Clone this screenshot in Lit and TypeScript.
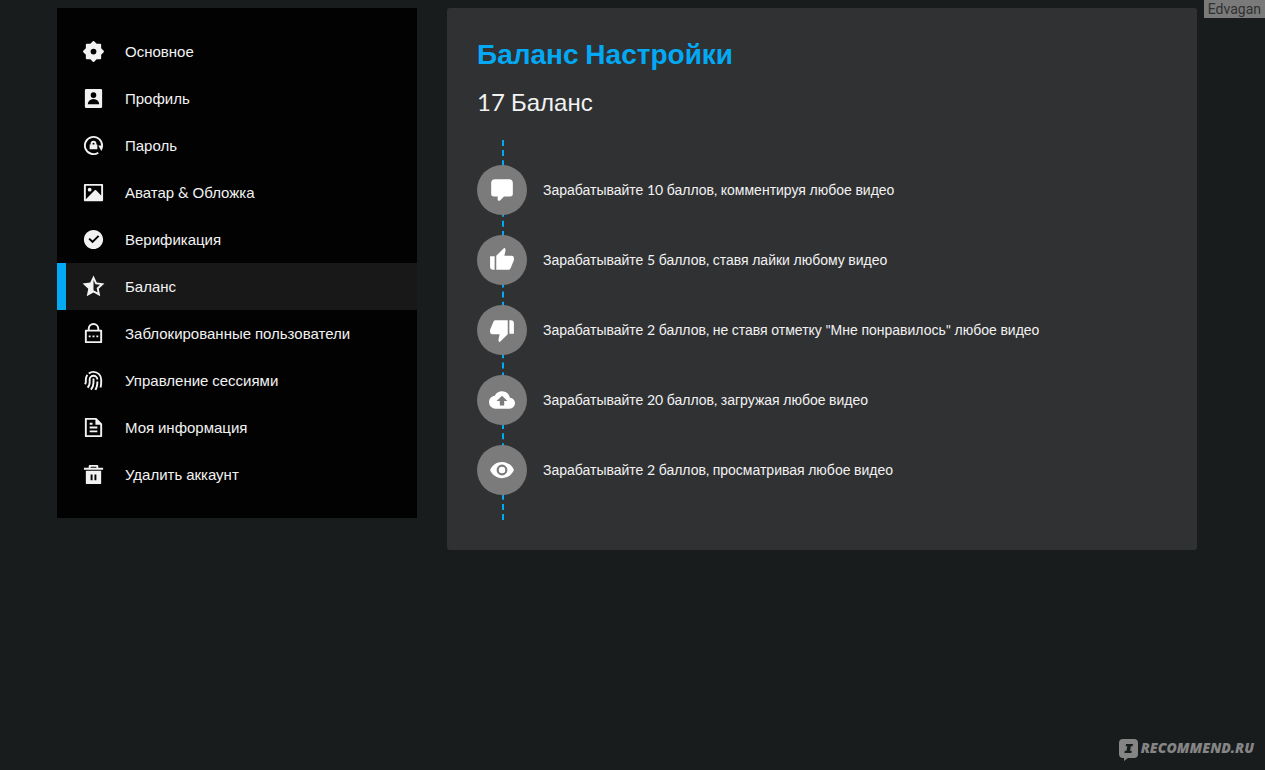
import { LitElement, html, svg, css } from "lit";
import { customElement, property } from "lit/decorators.js";

const ICONS: Record<string, string> = {
  settings:
    "M8.686 4l2.607-2.607a1 1 0 0 1 1.414 0L15.314 4H19a1 1 0 0 1 1 1v3.686l2.607 2.607a1 1 0 0 1 0 1.414L20 15.314V19a1 1 0 0 1-1 1h-3.686l-2.607 2.607a1 1 0 0 1-1.414 0L8.686 20H5a1 1 0 0 1-1-1v-3.686l-2.607-2.607a1 1 0 0 1 0-1.414L4 8.686V5a1 1 0 0 1 1-1h3.686zM12 15a3 3 0 1 0 0-6 3 3 0 0 0 0 6z",
  profile:
    "M4.500 2h15a1.500 1.500 0 0 1 1.500 1.500v17a1.500 1.500 0 0 1-1.500 1.500h-15a1.500 1.500 0 0 1-1.500-1.500v-17a1.500 1.500 0 0 1 1.500-1.500zM6 18h12a6 5.4 0 0 0-12 0zM12 11.4a2.9 2.9 0 1 0 0-5.8 2.9 2.9 0 0 0 0 5.8z",
  password:
    "M20 12a8 8 0 1 0-3.562 6.657l1.11 1.664A9.953 9.953 0 0 1 12 22C6.477 22 2 17.523 2 12S6.477 2 12 2s10 4.477 10 10a9.983 9.983 0 0 1-1.793 5.715L17 12h3zm-5-1h1v5H8v-5h1v-1a3 3 0 0 1 6 0v1zm-2 0v-1a1 1 0 0 0-2 0v1h2z",
  image:
    "M20 5H4v14l9.292-9.294a1 1 0 0 1 1.414 0L20 15.01V5zM2 3.993A1 1 0 0 1 2.992 3h18.016c.548 0 .992.445.992.993v16.014a1 1 0 0 1-.992.993H2.992A.993.993 0 0 1 2 20.007V3.993zM8 11a2 2 0 1 1 0-4 2 2 0 0 1 0 4z",
  verified:
    "M12 22C6.477 22 2 17.523 2 12S6.477 2 12 2s10 4.477 10 10-4.477 10-10 10zm-.997-6l7.07-7.071-1.414-1.414-5.656 5.657-2.829-2.829-1.414 1.414L11.003 16z",
  star:
    "M12 15.968l4.247 2.377-.949-4.773 3.573-3.305-4.833-.573L12 5.275v10.693zm0 2.292l-7.053 3.948 1.575-7.928L.587 8.792l8.027-.952L12 .5l3.386 7.34 8.027.952-5.935 5.488 1.575 7.928L12 18.26z",
  lock:
    "M18 8h2a1 1 0 0 1 1 1v12a1 1 0 0 1-1 1H4a1 1 0 0 1-1-1V9a1 1 0 0 1 1-1h2V7a6 6 0 1 1 12 0v1zM5 10v10h14V10H5zm6 4h2v2h-2v-2zm-4 0h2v2H7v-2zm8 0h2v2h-2v-2zm1-6V7a4 4 0 1 0-8 0v1h8z",
  fingerprint:
    "M17 13v1c0 2.77-.664 5.445-1.915 7.846l-.227.42-1.747-.974c1.16-2.08 1.81-4.41 1.882-6.836L15 14v-1h2zm-6-3h2v4l-.005.379a12.941 12.941 0 0 1-2.691 7.549l-.231.29-1.55-1.264a10.944 10.944 0 0 0 2.471-6.588L11 14v-4zm1-4a5 5 0 0 1 5 5h-2a3 3 0 0 0-6 0v3c0 2.235-.82 4.344-2.271 5.977l-.212.23-1.448-1.38a6.969 6.969 0 0 0 1.925-4.524L7 14v-3a5 5 0 0 1 5-5zm0-4a9 9 0 0 1 9 9v3c0 1.698-.202 3.37-.597 4.99l-.139.539-1.93-.526c.392-1.437.613-2.922.658-4.435L19 14v-3A7 7 0 0 0 7.808 5.394L6.383 3.968A8.962 8.962 0 0 1 12 2zM4.968 5.383l1.426 1.425a6.966 6.966 0 0 0-1.39 3.951L5 11l.004 2c0 1.12-.264 2.203-.761 3.177l-.142.265-1.737-.994a4.95 4.95 0 0 0 .636-2.212L3.004 13v-2c0-2.12.733-4.067 1.964-5.617z",
  file:
    "M21 8v12.993A1 1 0 0 1 20.007 22H3.993A.993.993 0 0 1 3 21.008V2.992C3 2.455 3.449 2 4.002 2h10.995L21 8zm-2 1h-5V4H5v16h14V9zM8 7h3v2H8V7zm0 4h8v2H8v-2zm0 4h8v2H8v-2z",
  trash:
    "M4 8h16v13a1 1 0 0 1-1 1H5a1 1 0 0 1-1-1V8zm3-3V3a1 1 0 0 1 1-1h8a1 1 0 0 1 1 1v2h5v2H2V5h5zm2-1v1h6V4H9zm0 8v6h2v-6H9zm4 0v6h2v-6h-2z",
  comment:
    "M9 22a1 1 0 0 1-1-1v-3H4.5A2.5 2.5 0 0 1 2 15.500V5.500a3.500 3.500 0 0 1 3.500-3.500h13a3.500 3.500 0 0 1 3.500 3.500v10a2.500 2.500 0 0 1-2.500 2.500H13.900l-3.700 3.710c-.2.190-.45.290-.7.290z",
  like:
    "M5.200 21H3.800A2.800 2.800 0 0 1 1 18.200V8.500H5.200ZM6.700 21V8.100L14.200.800C15.200 1.300 15.400 2.400 15.200 3.400L14.200 8H20.800A2.200 2.200 0 0 1 23 10.200V12C23 12.300 22.900 12.600 22.800 12.800L19.800 19.800A2 2 0 0 1 18 21Z",
  dislike:
    "M18.800 3H20.200A2.800 2.800 0 0 1 23 5.800V15.500H18.800ZM17.300 3V15.900L9.800 23.200C8.800 22.700 8.600 21.600 8.800 20.600L9.800 16H3.200A2.200 2.200 0 0 1 1 13.800V12C1 11.700 1.100 11.400 1.200 11.200L4.200 4.200A2 2 0 0 1 6 3Z",
  upload:
    "M14,13V17H10V13H7L12,8L17,13M19.35,10.03C18.67,6.59 15.64,4 12,4C9.11,4 6.6,5.64 5.35,8.03C2.34,8.36 0,10.9 0,14A6,6 0 0,0 6,20H19A5,5 0 0,0 24,15C24,12.36 21.95,10.22 19.35,10.03Z",
  eye:
    "M12,9A3,3 0 0,0 9,12A3,3 0 0,0 12,15A3,3 0 0,0 15,12A3,3 0 0,0 12,9M12,17A5,5 0 0,1 7,12A5,5 0 0,1 12,7A5,5 0 0,1 17,12A5,5 0 0,1 12,17M12,4.5C7,4.5 2.73,7.61 1,12C2.73,16.39 7,19.5 12,19.5C17,19.5 21.27,16.39 23,12C21.27,7.61 17,4.5 12,4.5Z",
};

const icon = (name: string) => html`<svg class="icon" viewBox="0 0 24 24" aria-hidden="true">
  ${svg`<path fill-rule="evenodd" d=${ICONS[name]}></path>`}
</svg>`;

// Cyrillic words are set in the Arial-width face; digits, spaces and punctuation in Lato.
const mixed = (text: string) =>
  text
    .split(/([\u0400-\u04FF]+)/)
    .filter((run) => run)
    .map((run) => (/[\u0400-\u04FF]/.test(run) ? run : html`<span class="latin">${run}</span>`));

const MENU = [
  { icon: "settings", label: "Основное" },
  { icon: "profile", label: "Профиль" },
  { icon: "password", label: "Пароль" },
  { icon: "image", label: "Аватар & Обложка" },
  { icon: "verified", label: "Верификация" },
  { icon: "star", label: "Баланс" },
  { icon: "lock", label: "Заблокированные пользователи" },
  { icon: "fingerprint", label: "Управление сессиями" },
  { icon: "file", label: "Моя информация" },
  { icon: "trash", label: "Удалить аккаунт" },
];

const REWARDS = [
  { icon: "comment", text: "Зарабатывайте 10 баллов, комментируя любое видео" },
  { icon: "like", text: "Зарабатывайте 5 баллов, ставя лайки любому видео" },
  { icon: "dislike", text: 'Зарабатывайте 2 баллов, не ставя отметку "Мне понравилось" любое видео' },
  { icon: "upload", text: "Зарабатывайте 20 баллов, загружая любое видео" },
  { icon: "eye", text: "Зарабатывайте 2 баллов, просматривая любое видео" },
];

const shared = css`
  * {
    box-sizing: border-box;
  }
  .latin {
    font-family: Lato, "Liberation Sans", sans-serif;
    white-space: pre-wrap;
  }
  .icon {
    display: block;
    flex: none;
    fill: currentColor;
  }
`;

@customElement("settings-menu")
export class SettingsMenu extends LitElement {
  @property() active = "";

  static styles = [
    shared,
    css`
      :host {
        display: block;
      }
      .menu {
        list-style: none;
        margin: 0;
        padding: 20px 0;
        background: #020202;
      }
      .link {
        display: flex;
        align-items: center;
        gap: 20px;
        min-height: 47px;
        padding: 0 16px;
        border-left: 9px solid transparent;
        color: #f2f2f2;
        font-size: 15px;
        line-height: 20px;
        text-decoration: none;
      }
      .link.active {
        background: #181818;
        border-left-color: #03a9f4;
      }
      .icon {
        width: 23px;
        height: 23px;
      }
    `,
  ];

  render() {
    return html`<nav>
      <ul class="menu">
        ${MENU.map(
          (item) => html`<li>
            <a class="link ${item.label === this.active ? "active" : ""}" href="#${item.icon}"
              >${icon(item.icon)}<span>${mixed(item.label)}</span></a
            >
          </li>`
        )}
      </ul>
    </nav>`;
  }
}

@customElement("balance-card")
export class BalanceCard extends LitElement {
  @property({ type: Number }) points = 0;

  static styles = [
    shared,
    css`
      :host {
        display: block;
      }
      .card {
        padding: 30px;
        border-radius: 3px;
        background: #303132;
        color: #f2f2f2;
      }
      .title {
        margin: 0 0 16px;
        color: #03a9f4;
        font-size: 28px;
        line-height: 30px;
        font-weight: 700;
      }
      .balance {
        margin: 0 0 21px;
        font-size: 24px;
        line-height: 32px;
        font-weight: 400;
      }
      .rewards {
        display: flex;
        flex-direction: column;
        gap: 20px;
        list-style: none;
        margin: 0 0 0 25px;
        padding: 25px 0;
        border-left: 2px dashed #03a9f4;
      }
      .reward {
        display: flex;
        align-items: center;
        gap: 16px;
        margin-left: -27px;
        font-size: 14px;
        line-height: 20px;
      }
      .badge {
        display: grid;
        place-items: center;
        flex: none;
        width: 50px;
        height: 50px;
        border-radius: 50%;
        background: #7b7b7b;
        color: #fff;
      }
      .icon {
        width: 26px;
        height: 26px;
      }
    `,
  ];

  render() {
    return html`<section class="card">
      <h1 class="title">${mixed("Баланс Настройки")}</h1>
      <h2 class="balance">${mixed(`${this.points} Баланс`)}</h2>
      <ul class="rewards">
        ${REWARDS.map(
          (reward) => html`<li class="reward">
            <span class="badge">${icon(reward.icon)}</span><span>${mixed(reward.text)}</span>
          </li>`
        )}
      </ul>
    </section>`;
  }
}

@customElement("app-root")
export class AppRoot extends LitElement {
  static styles = [
    shared,
    css`
      :host {
        display: block;
        min-height: 100vh;
        padding: 8px 68px 8px 57px;
        box-sizing: border-box;
        background: #191c1d;
        font-family: "Liberation Sans", Arial, sans-serif;
      }
      .columns {
        display: grid;
        grid-template-columns: repeat(12, minmax(0, 1fr));
        column-gap: 30px;
        align-items: start;
        max-width: 1140px;
        margin: 0 auto;
      }
      .side {
        grid-column: span 4;
      }
      .content {
        grid-column: span 8;
      }
      .author {
        position: absolute;
        top: 0;
        right: 0;
        padding: 0 4px;
        background: #7a7a7a;
        color: #303030;
        font-family: Roboto, sans-serif;
        font-size: 14px;
        line-height: 18px;
      }
      .brand {
        position: absolute;
        right: 11px;
        bottom: 8px;
        display: flex;
        align-items: flex-start;
        gap: 2px;
        color: #858585;
        font-family: "Open Sans", sans-serif;
        font-size: 14px;
        line-height: 20px;
        font-weight: 800;
        font-style: italic;
      }
      .bubble {
        display: block;
        width: 21px;
        height: 24px;
      }
    `,
  ];

  render() {
    return html`
      <main class="columns">
        <settings-menu class="side" active="Баланс"></settings-menu>
        <balance-card class="content" points="17"></balance-card>
      </main>
      <div class="author">Edvagan</div>
      <div class="brand">
        <svg class="bubble" viewBox="0 0 21 24" aria-hidden="true">
          <path fill="#858585" d="M5 1h11a4 4 0 0 1 4 4v11a4 4 0 0 1-4 4h-6l-4 3v-3H5a4 4 0 0 1-4-4V5a4 4 0 0 1 4-4z" />
          <path fill="#191c1d" d="M8 6h7l-.4 2.200h-1.700l-.8 4.600h1.700l-.4 2.200H6.400l.4-2.200h1.700l.8-4.600H7.600z" />
        </svg>
        <span>RECOMMEND.RU</span>
      </div>
    `;
  }
}
